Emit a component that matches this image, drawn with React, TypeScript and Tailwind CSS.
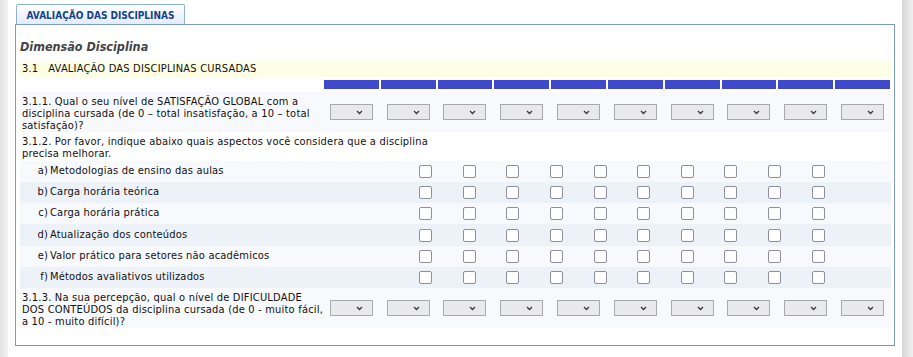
import React from "react"

const font = { fontFamily: '"DejaVu Sans Condensed", "DejaVu Sans", sans-serif' }

const cols = Array.from({ length: 10 })

const aspects = [
  { letter: "a)", label: "Metodologias de ensino das aulas", h: "h-[21px]", bg: "bg-[#f8f9fc]" },
  { letter: "b)", label: "Carga horária teórica", h: "h-[21px]", bg: "bg-[#edf1f8]" },
  { letter: "c)", label: "Carga horária prática", h: "h-[21px]", bg: "bg-[#f8f9fc]" },
  { letter: "d)", label: "Atualização dos conteúdos", h: "h-[22px]", bg: "bg-[#edf1f8]" },
  { letter: "e)", label: "Valor prático para setores não acadêmicos", h: "h-[21px]", bg: "bg-[#f8f9fc]" },
  { letter: "f)", label: "Métodos avaliativos utilizados", h: "h-[21px]", bg: "bg-[#edf1f8]" },
]

function Select() {
  return (
    <div className="relative h-4 w-[43px] border border-[#a9a9a9] bg-[#e9e9ed]">
      <svg className="absolute right-[9px] top-[5px]" width="7" height="5" viewBox="0 0 7 5">
        <path d="M1 1 L3.5 3.5 L6 1" stroke="#3a3a3a" strokeWidth="1.3" fill="none" />
      </svg>
    </div>
  )
}

function Checkbox() {
  return <div className="h-[13px] w-[13px] rounded-[2px] border border-[#8f8f9d] bg-white" />
}

function SelectRow({ lines }: { lines: string[] }) {
  return (
    <div className="grid h-[40px] grid-cols-[303px_repeat(10,1fr)] items-center bg-[#f8f9fc]">
      <div className="pl-[2px] pt-[3px] text-[11px] leading-[12px] tracking-[0.2px] text-[#111]">
        {lines.map((l, i) => (
          <div key={i} className="whitespace-nowrap">{l}</div>
        ))}
      </div>
      {cols.map((_, i) => (
        <div key={i} className="flex justify-center">
          <Select />
        </div>
      ))}
    </div>
  )
}

export default function App() {
  return (
    <div className="flex h-[357px] w-[913px] bg-white" style={font}>
      {/* left page edge */}
      <div className="w-2 bg-gradient-to-r from-[#e2e2e2] to-[#f3f3f3]" />

      <div className="flex-1 pl-[7px] pr-[7px] pt-1">
        {/* tab */}
        <div className="ml-[1px] flex h-5 w-[169px] items-center justify-center rounded-t-[2px] border border-b-0 border-[#8eb0dc] bg-gradient-to-b from-white to-[#e3ecf8] pt-[1px] text-[10px] font-bold text-[#15428b]">
          AVALIAÇÃO DAS DISCIPLINAS
        </div>

        {/* panel */}
        <div className="h-[322px] border border-[#7b9bc6] pl-1 pr-[3px]">
          <div className="mt-[14px] text-[12.5px] font-bold italic leading-4 text-[#444]">
            Dimensão Disciplina
          </div>

          <div className="mt-[6px] flex h-4 items-center bg-[#fefee4] pl-[2px] text-[11px] tracking-[0.2px] text-[#111]">
            <span className="whitespace-pre">3.1   AVALIAÇÃO DAS DISCIPLINAS CURSADAS</span>
          </div>

          {/* column header bars */}
          <div className="mt-[3px] grid h-[9px] grid-cols-[303px_repeat(10,1fr)]">
            <div />
            {cols.map((_, i) => (
              <div key={i} className="mx-[1px] bg-[#3e49cb]" />
            ))}
          </div>

          <div className="mt-[3px]">
            <SelectRow
              lines={[
                "3.1.1. Qual o seu nível de SATISFAÇÃO GLOBAL com a",
                "disciplina cursada (de 0 – total insatisfação, a 10 – total",
                "satisfação)?",
              ]}
            />

            <div className="h-[29px] bg-white pl-[2px] pt-[4px] text-[11px] leading-[12px] tracking-[0.2px] text-[#111]">
              <div className="whitespace-nowrap">3.1.2. Por favor, indique abaixo quais aspectos você considera que a disciplina</div>
              <div className="whitespace-nowrap">precisa melhorar.</div>
            </div>

            {aspects.map((a) => (
              <div key={a.letter} className={`flex items-center ${a.h} ${a.bg} text-[11px] tracking-[0.2px] text-[#111]`}>
                <div className="w-[28px] text-right">{a.letter}</div>
                <div className="w-[356px] pl-[2px] whitespace-nowrap">{a.label}</div>
                <div className="grid w-[436px] grid-cols-10">
                  {cols.map((_, i) => (
                    <div key={i} className="flex justify-center">
                      <Checkbox />
                    </div>
                  ))}
                </div>
              </div>
            ))}

            <SelectRow
              lines={[
                "3.1.3. Na sua percepção, qual o nível de DIFICULDADE",
                "DOS CONTEÚDOS da disciplina cursada (de 0 - muito fácil,",
                "a 10 - muito difícil)?",
              ]}
            />
          </div>
        </div>
      </div>

      {/* right scrollbar edge */}
      <div className="w-[11px] bg-gradient-to-r from-[#d6d6d6] to-[#f1f1f1]" />
    </div>
  )
}
